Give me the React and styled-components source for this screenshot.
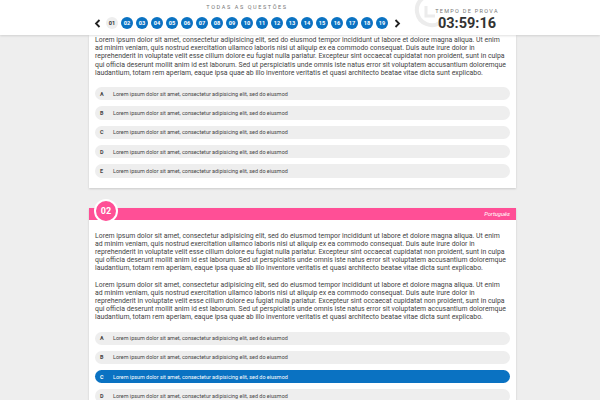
import React from "react";
import styled, { createGlobalStyle } from "styled-components";

const GlobalStyle = createGlobalStyle`
  body {
    margin: 0;
    background: #eeeeee;
    font-family: Roboto, "Liberation Sans", sans-serif;
    overflow: hidden;
  }
`;

// paragraph broken where the reference breaks it
const LOREM = [
  "Lorem ipsum dolor sit amet, consectetur adipisicing elit, sed do eiusmod tempor incididunt ut labore et dolore magna aliqua. Ut enim",
  "ad minim veniam, quis nostrud exercitation ullamco laboris nisi ut aliquip ex ea commodo consequat. Duis aute irure dolor in",
  "reprehenderit in voluptate velit esse cillum dolore eu fugiat nulla pariatur. Excepteur sint occaecat cupidatat non proident, sunt in culpa",
  "qui officia deserunt mollit anim id est laborum. Sed ut perspiciatis unde omnis iste natus error sit voluptatem accusantium doloremque",
  "laudantium, totam rem aperiam, eaque ipsa quae ab illo inventore veritatis et quasi architecto beatae vitae dicta sunt explicabo.",
];

const OPTION = "Lorem ipsum dolor sit amet, consectetur adipisicing elit, sed do eiusmod";

const Page = styled.div`
  width: 600px;
  height: 400px;
  overflow: hidden;
  position: relative;
`;

const Header = styled.header`
  position: relative;
  z-index: 2;
  height: 35px;
  background: #fff;
  box-shadow: 0 1px 2px rgba(0, 0, 0, 0.12);
  display: flex;
  align-items: flex-start;
  padding-left: 90px;
`;

const NavBlock = styled.div`
  width: 314px;
  display: flex;
  flex-direction: column;
  align-items: center;
`;

const NavTitle = styled.div`
  margin-top: 4px;
  font-size: 5.5px;
  letter-spacing: 1.6px;
  color: #777;
  line-height: 7px;
`;

const NavRow = styled.div`
  margin-top: 6px;
  display: flex;
  align-items: center;
  gap: 3px;
`;

const Arrow = styled.span`
  width: 12px;
  display: flex;
  justify-content: center;
  color: #222;
`;

const Num = styled.span`
  width: 12px;
  height: 12px;
  border-radius: 50%;
  background: ${(p) => (p.$current ? "#eeeeee" : "#0a72c2")};
  color: ${(p) => (p.$current ? "#333" : "#fff")};
  font-size: 5.6px;
  font-weight: 700;
  display: flex;
  align-items: center;
  justify-content: center;
`;

const Timer = styled.div`
  position: relative;
  margin-left: 27px;
  width: 72px;
  display: flex;
  flex-direction: column;
  align-items: center;
`;

const ClockMark = styled.svg`
  position: absolute;
  left: -24px;
  top: -8px;
  z-index: 0;
`;

const TimerLabel = styled.div`
  position: relative;
  margin-top: 8px;
  font-size: 5.5px;
  letter-spacing: 1.3px;
  color: #777;
  line-height: 7px;
`;

const TimerValue = styled.div`
  position: relative;
  margin-top: 1px;
  font-size: 14.5px;
  font-weight: 700;
  color: #333;
  line-height: 16px;
`;

const Main = styled.main`
  margin-left: 89px;
  width: 427px;
  display: flex;
  flex-direction: column;
  gap: 20px;
`;

const Card = styled.section`
  background: #fff;
  box-shadow: 0 1px 2px rgba(0, 0, 0, 0.15);
  padding: ${(p) => (p.$top ? "1px" : "0")} 6px 10px 6px;
`;

const CardBar = styled.div`
  position: relative;
  height: 12px;
  margin: 0 -6px;
  background: #ff4f96;
  display: flex;
  align-items: center;
  justify-content: flex-end;
  padding-right: 6px;
`;

const Badge = styled.div`
  position: absolute;
  left: 5px;
  top: -9px;
  width: 20px;
  height: 20px;
  border-radius: 50%;
  background: #ff4f96;
  border: 2px solid #fff;
  color: #fff;
  font-size: 9px;
  font-weight: 700;
  display: flex;
  align-items: center;
  justify-content: center;
`;

const Subject = styled.span`
  font-size: 5.8px;
  font-style: italic;
  color: #fff;
`;

const Text = styled.p`
  margin: 0;
  font-size: 6.9px;
  line-height: 8.2px;
  color: #444;
  & + & {
    margin-top: 8px;
  }
`;

const Line = styled.span`
  display: block;
  white-space: nowrap;
`;

const TextWrap = styled.div`
  padding-top: ${(p) => p.$pad}px;
`;

const Options = styled.div`
  margin-top: 10px;
  display: flex;
  flex-direction: column;
  gap: 6px;
`;

const Option = styled.div`
  height: 13.3px;
  border-radius: 7px;
  background: ${(p) => (p.$selected ? "#0a72c2" : "#eeeeee")};
  color: ${(p) => (p.$selected ? "#fff" : "#444")};
  display: flex;
  align-items: center;
  font-size: 5.45px;
`;

const Letter = styled.span`
  flex: none;
  width: 13px;
  padding-left: 5px;
  font-weight: 700;
`;

const Chevron = ({ dir }) => (
  <svg width="7" height="9" viewBox="0 0 7 9">
    <path
      d={dir === "left" ? "M5.5 1 L2 4.5 L5.5 8" : "M1.5 1 L5 4.5 L1.5 8"}
      fill="none"
      stroke="#222"
      strokeWidth="1.8"
    />
  </svg>
);

const nums = Array.from({ length: 19 }, (_, i) => String(i + 1).padStart(2, "0"));

function Paragraph() {
  return (
    <Text>
      {LOREM.map((l, i) => (
        <Line key={i}>{l}</Line>
      ))}
    </Text>
  );
}

function OptionList({ selected }) {
  return (
    <Options>
      {["A", "B", "C", "D", "E"].map((l) => (
        <Option key={l} $selected={l === selected}>
          <Letter>{l}</Letter>
          {OPTION}
        </Option>
      ))}
    </Options>
  );
}

export default function App() {
  return (
    <Page>
      <GlobalStyle />
      <Header>
        <NavBlock>
          <NavTitle>TODAS AS QUESTÕES</NavTitle>
          <NavRow>
            <Arrow>
              <Chevron dir="left" />
            </Arrow>
            {nums.map((n) => (
              <Num key={n} $current={n === "01"}>
                {n}
              </Num>
            ))}
            <Arrow>
              <Chevron dir="right" />
            </Arrow>
          </NavRow>
        </NavBlock>
        <Timer>
          <ClockMark width="40" height="40" viewBox="0 0 40 40">
            <path
              d="M30 4 A15 15 0 1 0 34 30"
              fill="none"
              stroke="#ececec"
              strokeWidth="4"
            />
            <path d="M19 14 V24 H28" fill="none" stroke="#ececec" strokeWidth="3" />
          </ClockMark>
          <TimerLabel>TEMPO DE PROVA</TimerLabel>
          <TimerValue>03:59:16</TimerValue>
        </Timer>
      </Header>
      <Main>
        <Card $top>
          <TextWrap $pad={0}>
            <Paragraph />
          </TextWrap>
          <OptionList />
        </Card>
        <Card>
          <CardBar>
            <Badge>02</Badge>
            <Subject>Português</Subject>
          </CardBar>
          <TextWrap $pad={12}>
            <Paragraph />
            <Paragraph />
          </TextWrap>
          <OptionList selected="C" />
        </Card>
      </Main>
    </Page>
  );
}
